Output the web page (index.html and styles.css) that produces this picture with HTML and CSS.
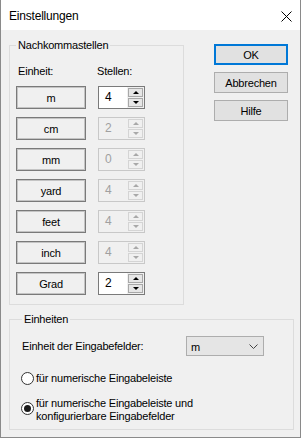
FILE: index.html
```html
<!DOCTYPE html>
<html lang="de">
<head>
    <meta charset="UTF-8">
    <title>Einstellungen</title>
    <link rel="stylesheet" href="styles.css">
</head>
<body>
    <div class="window">
        <!-- Title bar -->
        <div class="titlebar">
            <span class="title">Einstellungen</span>
            <svg class="close" width="11" height="11" viewBox="0 0 11 11">
                <path d="M0.5 0.5 L10.5 10.5 M10.5 0.5 L0.5 10.5" stroke="#000" stroke-width="1" fill="none"/>
            </svg>
        </div>

        <div class="client">
            <div class="top">
                <!-- Decimal places -->
                <fieldset class="group group-digits">
                    <legend>Nachkommastellen</legend>
                    <div class="digits-grid">
                        <span class="col-label">Einheit:</span>
                        <span class="col-label col-label-right">Stellen:</span>

                        <button class="unit-btn">m</button>
                        <div class="spin">
                            <span class="spin-value">4</span>
                            <span class="spin-btns"><span class="spin-up"></span><span class="spin-down"></span></span>
                        </div>

                        <button class="unit-btn">cm</button>
                        <div class="spin disabled">
                            <span class="spin-value">2</span>
                            <span class="spin-btns"><span class="spin-up"></span><span class="spin-down"></span></span>
                        </div>

                        <button class="unit-btn">mm</button>
                        <div class="spin disabled">
                            <span class="spin-value">0</span>
                            <span class="spin-btns"><span class="spin-up"></span><span class="spin-down"></span></span>
                        </div>

                        <button class="unit-btn">yard</button>
                        <div class="spin disabled">
                            <span class="spin-value">4</span>
                            <span class="spin-btns"><span class="spin-up"></span><span class="spin-down"></span></span>
                        </div>

                        <button class="unit-btn">feet</button>
                        <div class="spin disabled">
                            <span class="spin-value">4</span>
                            <span class="spin-btns"><span class="spin-up"></span><span class="spin-down"></span></span>
                        </div>

                        <button class="unit-btn">inch</button>
                        <div class="spin disabled">
                            <span class="spin-value">4</span>
                            <span class="spin-btns"><span class="spin-up"></span><span class="spin-down"></span></span>
                        </div>

                        <button class="unit-btn">Grad</button>
                        <div class="spin">
                            <span class="spin-value">2</span>
                            <span class="spin-btns"><span class="spin-up"></span><span class="spin-down"></span></span>
                        </div>
                    </div>
                </fieldset>

                <!-- Dialog buttons -->
                <div class="actions">
                    <button class="dlg-btn default">OK</button>
                    <button class="dlg-btn">Abbrechen</button>
                    <button class="dlg-btn">Hilfe</button>
                </div>
            </div>

            <!-- Units -->
            <fieldset class="group group-units">
                <legend>Einheiten</legend>
                <div class="unit-row">
                    <span class="unit-label">Einheit der Eingabefelder:</span>
                    <div class="combo">
                        <span>m</span>
                        <svg width="9" height="5" viewBox="0 0 9 5">
                            <path d="M0.5 0.5 L4.5 4.5 L8.5 0.5" stroke="#444" stroke-width="1" fill="none"/>
                        </svg>
                    </div>
                </div>
                <label class="radio radio-first">
                    <span class="radio-dot"></span>
                    <span>für numerische Eingabeleiste</span>
                </label>
                <label class="radio radio-multi">
                    <span class="radio-dot checked"></span>
                    <span>für numerische Eingabeleiste und<br>konfigurierbare Eingabefelder</span>
                </label>
            </fieldset>
        </div>
    </div>
</body>
</html>
```

FILE: styles.css
```css
/* Basic Reset */
* {
    box-sizing: border-box;
    margin: 0;
    padding: 0;
}

body {
    font-family: "Liberation Sans", Arial, sans-serif;
    font-size: 11px;
    letter-spacing: -0.2px;
    color: #000;
    background: #fff;
}

button {
    font: inherit;
    letter-spacing: inherit;
    color: inherit;
}

/* Window frame */
.window {
    width: 301px;
    height: 438px;
    border: 1px solid #8a8a8a;
    border-top: none;
    background: #f0f0f0;
    display: flex;
    flex-direction: column;
}

.titlebar {
    height: 30px;
    flex-shrink: 0;
    background: #fff;
    display: flex;
    align-items: center;
    justify-content: space-between;
    padding: 0 8px 0 8px;
}

.title {
    font-size: 12px;
    line-height: 14px;
    margin-top: 1px;
}

.close {
    display: block;
    margin-top: 2px;
}

.client {
    padding: 9px 7px 0 8px;
}

.top {
    display: flex;
    align-items: flex-start;
}

/* Group boxes */
.group {
    border: 1px solid #dcdcdc;
}

.group legend {
    padding: 0 2px;
    line-height: 13px;
}

.group-digits {
    width: 175px;
    height: 266px;
    padding: 13px 6px 0 6px;
}

.digits-grid {
    display: grid;
    grid-template-columns: 70px 47px;
    grid-template-rows: 13px;
    grid-auto-rows: 23px;
    column-gap: 12px;
    row-gap: 8px;
}

.col-label {
    line-height: 13px;
    padding-left: 2px;
}

.col-label-right {
    padding-left: 0;
    margin-left: -1px;
}

.unit-btn {
    height: 23px;
    background: #f0f0f0;
    border: 1px solid #7a7a7a;
    box-shadow: inset 0 0 0 1px #c4c4c4;
}

/* Spin boxes */
.spin {
    display: flex;
    height: 23px;
    border: 1px solid #7a7a7a;
    background: #fff;
}

.spin-value {
    flex: 1;
    line-height: 21px;
    padding-left: 6px;
    font-size: 12px;
}

.spin-btns {
    width: 17px;
    display: flex;
    flex-direction: column;
    gap: 1px;
    padding: 1px;
    background: #f0f0f0;
}

.spin-up,
.spin-down {
    flex: 1;
    border: 1px solid #a8a8a8;
    background: #e6e6e6;
    display: flex;
    align-items: center;
    justify-content: center;
}

.spin-up::after,
.spin-down::after {
    content: "";
    border-left: 3px solid transparent;
    border-right: 3px solid transparent;
}

.spin-up::after {
    border-bottom: 3px solid #000;
}

.spin-down::after {
    border-top: 3px solid #000;
}

.spin.disabled {
    border-color: #c8c8c8;
    background: #f0f0f0;
    color: #a0a0a0;
}

.spin.disabled .spin-up,
.spin.disabled .spin-down {
    border-color: #d4d4d4;
    background: #f0f0f0;
}

.spin.disabled .spin-up::after {
    border-bottom-color: #a8a8a8;
}

.spin.disabled .spin-down::after {
    border-top-color: #a8a8a8;
}

/* Dialog buttons */
.actions {
    margin-left: 30px;
    margin-top: 5px;
    width: 74px;
    display: flex;
    flex-direction: column;
    gap: 7px;
}

.dlg-btn {
    height: 21px;
    background: #e1e1e1;
    border: 1px solid #adadad;
}

.dlg-btn.default {
    border: 2px solid #0078d7;
}

/* Units group */
.group-units {
    width: 285px;
    height: 117px;
    margin-top: 8px;
    padding: 10px 12px 0 12px;
}

.unit-row {
    display: flex;
    align-items: center;
    height: 20px;
}

.unit-label {
    width: 164px;
    line-height: 13px;
}

.combo {
    width: 78px;
    height: 20px;
    border: 1px solid #adadad;
    background: #e5e5e5;
    display: flex;
    align-items: center;
    justify-content: space-between;
    padding: 1px 5px 0 4px;
}

.radio {
    display: flex;
    gap: 2px;
    margin-left: -1px;
    line-height: 13px;
}

.radio-first {
    align-items: center;
    margin-top: 16px;
}

.radio-multi {
    align-items: flex-start;
    margin-top: 12px;
}

.radio-dot {
    width: 13px;
    height: 13px;
    flex-shrink: 0;
    border: 1px solid #333;
    border-radius: 50%;
    background: #fff;
    display: flex;
    align-items: center;
    justify-content: center;
}

.radio-multi .radio-dot {
    margin-top: 5px;
}

.radio-dot.checked::after {
    content: "";
    width: 7px;
    height: 7px;
    border-radius: 50%;
    background: #1a1a1a;
}
```
